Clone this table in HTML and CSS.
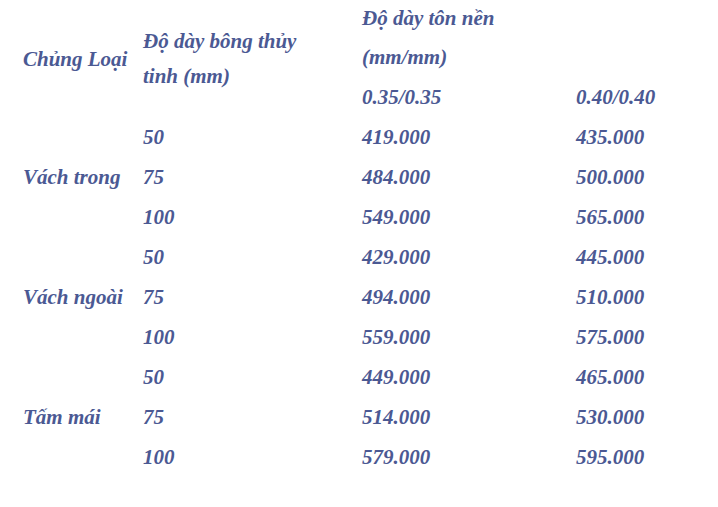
FILE: index.html
```html
<!DOCTYPE html>
<html lang="vi">
<head>
<meta charset="utf-8">
<title>Bảng giá</title>
<link rel="stylesheet" href="styles.css">
</head>
<body>
<div class="table">
  <div class="cell c1 span3 center">Chủng Loại</div>
  <div class="cell c2 span3 center two">Độ dày bông thủy<br>tinh (mm)</div>
  <div class="cell c3 colspan">Độ dày tôn nền</div>
  <div class="cell c3 colspan">(mm/mm)</div>
  <div class="cell c3">0.35/0.35</div>
  <div class="cell c4">0.40/0.40</div>

  <div class="cell c1 span3 center">Vách trong</div>
  <div class="cell c2">50</div><div class="cell c3">419.000</div><div class="cell c4">435.000</div>
  <div class="cell c2">75</div><div class="cell c3">484.000</div><div class="cell c4">500.000</div>
  <div class="cell c2">100</div><div class="cell c3">549.000</div><div class="cell c4">565.000</div>

  <div class="cell c1 span3 center">Vách ngoài</div>
  <div class="cell c2">50</div><div class="cell c3">429.000</div><div class="cell c4">445.000</div>
  <div class="cell c2">75</div><div class="cell c3">494.000</div><div class="cell c4">510.000</div>
  <div class="cell c2">100</div><div class="cell c3">559.000</div><div class="cell c4">575.000</div>

  <div class="cell c1 span3 center">Tấm mái</div>
  <div class="cell c2">50</div><div class="cell c3">449.000</div><div class="cell c4">465.000</div>
  <div class="cell c2">75</div><div class="cell c3">514.000</div><div class="cell c4">530.000</div>
  <div class="cell c2">100</div><div class="cell c3">579.000</div><div class="cell c4">595.000</div>
</div>
</body>
</html>
```
FILE: styles.css
```css
html, body {
  margin: 0;
  padding: 0;
  background: #ffffff;
}
body {
  width: 718px;
  height: 507px;
  overflow: hidden;
  font-family: "Liberation Serif", "Times New Roman", serif;
  font-weight: bold;
  font-style: italic;
  font-size: 21px;
  color: #4b5993;
}
.table {
  display: grid;
  grid-template-columns: 120px 219px 214px 1fr;
  grid-template-rows: 36px 41px repeat(10, 40px);
  grid-auto-flow: row dense;
  padding-left: 23px;
}
.cell {
  display: flex;
  align-items: center;
  white-space: nowrap;
  line-height: 24px;
}
.c1 { grid-column: 1; }
.c2 { grid-column: 2; }
.c3 { grid-column: 3; }
.c4 { grid-column: 4; }
.colspan { grid-column: 3 / span 2; }
.span3 { grid-row: span 3; }
.two { line-height: 35px; }
```
